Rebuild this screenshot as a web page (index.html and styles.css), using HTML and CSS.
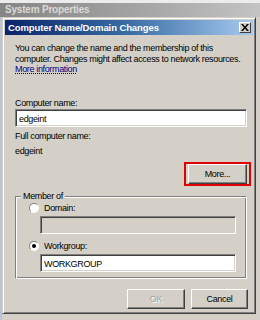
FILE: index.html
```html
<!DOCTYPE html>
<html lang="en">
<head>
  <meta charset="UTF-8">
  <title>Computer Name/Domain Changes</title>
  <link rel="stylesheet" href="styles.css">
</head>
<body>
  <div class="screen">
    <div class="top-strip"></div>
    <!-- Inactive parent window caption -->
    <div class="parent-title">System Properties</div>
    <div class="dialog">
      <div class="titlebar">
        <span class="title-text">Computer Name/Domain Changes</span>
        <span class="close-btn">
          <svg width="8" height="7" viewBox="0 0 8 7"><path d="M0 0h2l2 2.5L6 0h2L5 3.5 8 7H6L4 4.5 2 7H0l3-3.5z" fill="#000"/></svg>
        </span>
      </div>
      <div class="dialog-body">
        <p class="intro">You can change the name and the membership of this<br>computer. Changes might affect access to network resources.<br><a class="more-info" href="#">More information</a></p>

        <div class="field-label">Computer name:</div>
        <div class="textbox">edgeint</div>

        <div class="field-label full-label">Full computer name:</div>
        <div class="full-name">edgeint</div>

        <div class="more-row">
          <div class="callout">
            <button class="btn">More...</button>
          </div>
        </div>

        <!-- Member of group -->
        <div class="groupbox">
          <span class="group-legend">Member of</span>
          <div class="radio-row">
            <span class="radio"></span>
            <span>Domain:</span>
          </div>
          <div class="textbox sub disabled"></div>
          <div class="radio-row workgroup-row">
            <span class="radio checked"></span>
            <span>Workgroup:</span>
          </div>
          <div class="textbox sub">WORKGROUP</div>
        </div>

        <div class="actions">
          <button class="btn ok" disabled>OK</button>
          <button class="btn cancel">Cancel</button>
        </div>
      </div>
    </div>
  </div>
</body>
</html>
```

FILE: styles.css
```css
/* Global */
body {
  margin: 0;
  padding: 0;
  font-family: 'Liberation Sans', Arial, sans-serif;
  font-size: 9px;
  letter-spacing: -0.35px;
  color: #000;
}

.screen {
  width: 260px;
  height: 320px;
  overflow: hidden;
  background-color: #d4d0c8;
  box-shadow: inset 2px 0 0 #b9c4d6;
}

.top-strip {
  height: 3px;
  background-color: #ececec;
}

/* Inactive caption of the window behind */
.parent-title {
  height: 14px;
  line-height: 14px;
  padding-left: 5px;
  background: linear-gradient(90deg, #858585, #a8a8a8 60%, #c4c4c4);
  color: #dcdad4;
  font-weight: bold;
  font-size: 10px;
  letter-spacing: -0.2px;
}

/* Dialog frame */
.dialog {
  margin-left: 2px;
  width: 248px;
  height: 291px;
  padding: 2px;
  background-color: #d4d0c8;
  border: 1px solid;
  border-color: #d4d0c8 #404040 #404040 #d4d0c8;
  box-shadow: inset 1px 1px 0 #fff, inset -1px -1px 0 #808080;
  display: flex;
  flex-direction: column;
}

.titlebar {
  height: 15px;
  display: flex;
  align-items: center;
  justify-content: space-between;
  padding: 0 2px 0 3px;
  background: linear-gradient(90deg, #0a246a, #3a6ea5 50%, #a6caf0);
  color: #fff;
  font-weight: bold;
  font-size: 9.5px;
  letter-spacing: -0.1px;
}

.close-btn {
  width: 12px;
  height: 11px;
  display: flex;
  align-items: center;
  justify-content: center;
  background-color: #d4d0c8;
  border: 1px solid;
  border-color: #fff #404040 #404040 #fff;
  box-sizing: border-box;
}

.dialog-body {
  padding: 8px 6px 0 10px;
  display: flex;
  flex-direction: column;
}

.intro {
  margin: 0;
  line-height: 10.5px;
  white-space: nowrap;
}

.more-info {
  color: #000080;
  text-decoration: underline dotted;
}

.field-label {
  margin-top: 23px;
  line-height: 11px;
}

.full-label {
  margin-top: 4px;
}

.full-name {
  margin-top: 4px;
  line-height: 11px;
}

/* Sunken text box */
.textbox {
  height: 18px;
  line-height: 18px;
  padding-left: 3px;
  background-color: #fff;
  border: 1px solid;
  border-color: #808080 #fff #fff #808080;
  box-shadow: inset 1px 1px 0 #404040, inset -1px -1px 0 #d4d0c8;
  box-sizing: border-box;
}

.textbox.disabled {
  background-color: #d4d0c8;
}

/* Buttons */
.btn {
  height: 20px;
  padding: 0;
  font-family: inherit;
  font-size: 9px;
  letter-spacing: -0.35px;
  color: #000;
  background-color: #d4d0c8;
  border: 1px solid;
  border-color: #fff #404040 #404040 #fff;
  box-shadow: inset -1px -1px 0 #808080;
  box-sizing: border-box;
}

.btn:disabled {
  color: #a0a0a0;
  text-shadow: 1px 1px 0 #fff;
}

.more-row {
  display: flex;
  justify-content: flex-end;
  margin-top: 5px;
  margin-right: -4px;
}

.callout {
  border: 2px solid #e00000;
  padding: 0 2px;
}

.callout .btn {
  width: 59px;
}

/* Member of group */
.groupbox {
  position: relative;
  margin-top: 10px;
  height: 83px;
  padding: 5px 10px 0 13px;
  border: 1px solid;
  border-color: #808080 #fff #fff #808080;
  box-shadow: inset 1px 1px 0 #fff, inset -1px -1px 0 #808080;
  box-sizing: border-box;
}

.group-legend {
  position: absolute;
  top: -6px;
  left: 5px;
  padding: 0 2px;
  background-color: #d4d0c8;
  line-height: 11px;
}

.radio-row {
  display: flex;
  align-items: center;
  gap: 5px;
  height: 12px;
}

.workgroup-row {
  margin-top: 6px;
}

.radio {
  width: 8px;
  height: 8px;
  border-radius: 50%;
  background-color: #fff;
  border: 1px solid;
  border-color: #808080 #fff #fff #808080;
  position: relative;
}

.radio.checked::after {
  content: '';
  position: absolute;
  left: 2px;
  top: 2px;
  width: 4px;
  height: 4px;
  border-radius: 50%;
  background-color: #000;
}

.textbox.sub {
  margin: 2px 0 0 11px;
}

.actions {
  display: flex;
  justify-content: flex-end;
  gap: 6px;
  margin-top: 10px;
  margin-right: -1px;
}

.actions .ok {
  width: 58px;
}

.actions .cancel {
  width: 57px;
}
```
